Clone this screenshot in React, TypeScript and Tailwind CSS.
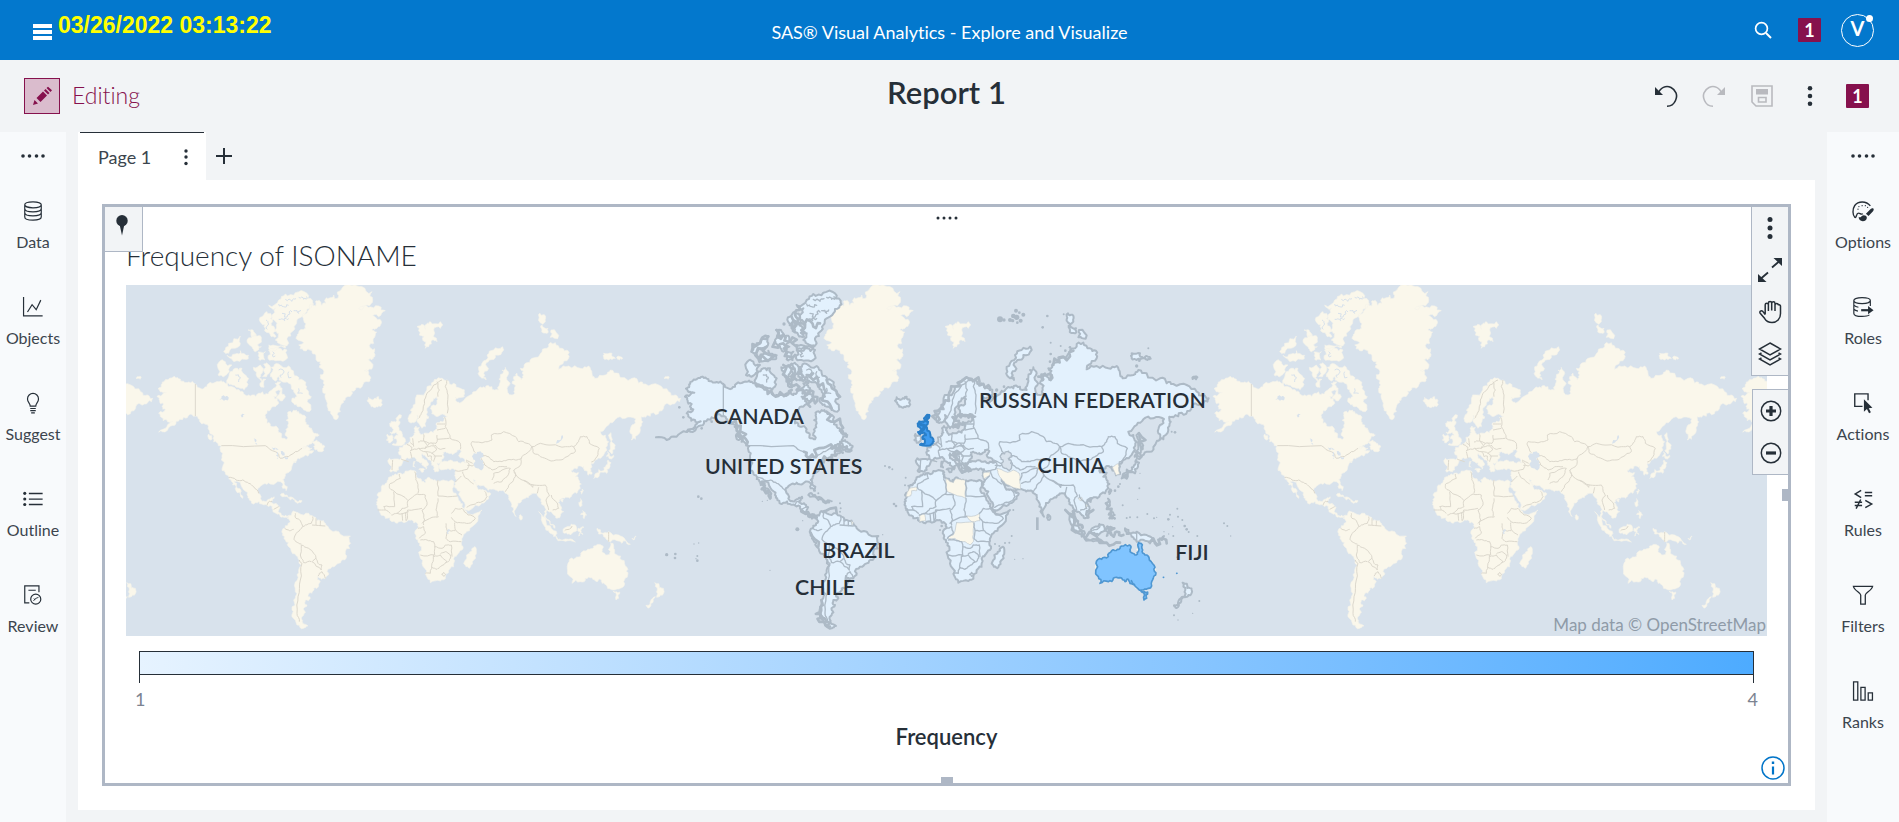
import type { ReactNode } from "react";

/* ---------- Map geometry ---------- */

// One world copy is 1584 units wide; longitude 0 is at x = 870, the equator at y = 745.
const WORLD = 1584;

const CONTINENTS = [
  // North America
  "250,312 230,306 215,304 200,296 183,291 170,298 155,305 148,318 138,326 150,335 163,338 150,345 135,350 143,362 155,372 150,380 160,388 140,400 148,412 165,420 182,424 165,440 140,456 150,455 176,438 192,424 215,412 232,404 250,408 262,418 275,430 288,445 295,462 303,475 315,488 328,498 326,515 328,540 332,560 340,578 350,590 357,600 362,615 372,632 385,648 392,655 384,640 372,620 366,604 378,605 392,625 405,645 412,660 430,668 450,672 465,676 480,685 492,700 505,710 520,712 530,708 520,706 508,704 500,690 498,675 485,672 478,668 482,658 486,650 470,658 455,663 445,655 440,640 443,622 455,612 470,608 490,610 505,605 512,610 518,625 522,632 516,612 512,600 520,588 532,575 540,558 552,548 545,545 555,538 570,532 580,525 590,525 605,512 590,512 600,505 588,500 572,505 585,495 600,490 605,480 622,465 612,460 600,450 590,435 580,425 570,405 560,395 545,390 530,395 528,410 530,430 525,445 520,460 525,478 512,475 508,460 500,448 480,440 465,430 460,415 465,400 475,390 490,380 500,370 495,355 485,350 500,345 510,330 500,315 505,305 490,310 480,330 470,340 460,345 440,340 420,345 400,345 385,335 370,325 350,320 335,305 320,305 300,310 285,320 265,325",
  // South America
  "528,708 540,698 550,695 560,700 590,700 610,712 625,722 640,730 650,745 680,755 715,768 716,790 700,815 698,840 680,850 660,860 650,880 640,895 628,898 618,888 625,905 620,918 605,925 600,940 590,942 595,955 580,960 585,975 575,990 575,1005 570,1020 572,1030 588,1038 575,1045 555,1035 540,1010 540,990 545,960 550,935 556,900 560,870 562,840 550,822 530,800 520,780 512,760 518,745 528,735 532,720",
  // Africa
  "848,583 858,580 880,573 910,573 912,590 918,595 930,605 940,608 945,595 960,598 978,602 1000,602 1018,600 1026,606 1025,620 1032,640 1045,665 1050,680 1065,695 1070,702 1110,690 1098,715 1080,740 1060,760 1050,775 1048,790 1050,810 1035,825 1025,835 1025,850 1015,865 1000,890 985,903 955,908 948,898 938,865 925,835 928,800 918,780 912,765 918,745 915,730 905,728 890,720 860,725 840,725 820,715 805,700 797,685 795,670 798,655 795,645 808,620 825,608 835,590",
  // Eurasia
  "845,573 833,572 830,550 832,535 855,537 870,538 866,525 860,520 866,512 862,503 872,502 884,492 895,485 905,466 910,458 906,445 912,438 922,442 922,458 935,463 950,460 965,458 975,445 972,432 985,424 996,422 994,412 1006,410 985,405 968,406 960,392 958,378 975,365 975,350 965,355 955,370 945,385 945,400 950,410 942,425 940,440 930,445 922,432 918,415 915,405 905,428 895,428 890,410 895,390 910,372 925,345 945,320 965,305 985,295 1005,300 1025,310 1045,325 1058,342 1050,352 1030,352 1036,366 1050,365 1060,355 1075,345 1085,335 1100,325 1120,325 1140,320 1160,330 1165,305 1165,290 1170,270 1180,262 1190,280 1190,305 1185,325 1200,345 1208,330 1200,310 1205,290 1215,280 1228,300 1235,285 1225,265 1240,250 1260,235 1290,215 1310,200 1330,188 1350,205 1368,212 1370,235 1345,255 1340,268 1370,258 1405,265 1430,258 1440,280 1448,295 1480,285 1495,270 1520,280 1560,295 1580,310 1600,312 1640,315 1670,335 1690,345 1706,355 1692,365 1680,372 1665,370 1650,392 1625,398 1600,412 1588,410 1592,425 1585,450 1570,478 1558,480 1555,460 1560,435 1572,417 1540,415 1510,418 1490,435 1465,455 1480,465 1490,485 1485,510 1470,530 1450,540 1438,550 1434,566 1440,582 1428,586 1422,572 1415,560 1400,558 1390,565 1378,570 1388,578 1400,578 1390,590 1400,600 1408,612 1405,625 1395,640 1378,650 1365,652 1350,655 1342,660 1338,668 1348,680 1355,695 1345,708 1335,715 1325,705 1315,695 1305,690 1302,705 1310,720 1322,735 1328,745 1315,735 1305,720 1300,700 1298,680 1288,672 1285,655 1275,640 1265,640 1255,645 1240,655 1228,665 1215,680 1212,710 1205,700 1198,680 1192,660 1190,645 1180,640 1168,632 1150,630 1140,628 1120,622 1100,615 1090,600 1085,598 1095,615 1105,628 1115,630 1125,635 1135,645 1120,665 1100,678 1070,692 1062,690 1060,675 1045,650 1033,625 1028,608 1030,590 1030,575 1032,568 1015,570 1000,568 990,570 980,558 985,545 995,543 1010,542 1030,545 1050,545 1062,548 1055,535 1040,525 1048,513 1035,510 1025,522 1010,520 1000,515 992,525 988,540 985,548 975,550 980,560 976,575 968,572 965,560 958,548 955,540 940,528 930,520 928,525 938,540 950,552 942,568 935,558 920,545 910,535 895,535 880,540 870,552 860,570",
];

const ISLANDS = [
  // Canadian Arctic
  "480,105 490,85 470,75 500,60 520,42 550,38 585,40 602,62 598,82 580,100 560,115 550,135 540,155 525,175 530,190 500,190 490,180 500,160 488,150 495,130 480,120",
  "450,110 465,95 478,105 482,125 488,145 492,170 475,165 460,145 448,130",
  "470,210 500,205 525,210 520,240 490,242 468,235",
  "470,195 495,198 520,196 520,204 495,206 470,205",
  "335,215 350,190 385,168 385,190 365,205 350,220",
  "345,226 370,222 385,212 410,226 405,238 375,242",
  "405,180 430,165 448,172 436,195 448,200 430,215 420,200",
  "438,216 460,215 458,240 440,238",
  "408,150 425,155 432,168 418,170",
  "322,245 340,245 360,255 352,275 335,290 318,285",
  "352,280 370,265 390,265 400,285 410,295 405,320 385,325 360,315 345,310",
  "424,262 445,255 450,280 436,292",
  "455,252 472,255 465,285 452,290",
  "440,295 462,298 456,322 444,318",
  "478,262 500,252 530,258 545,280 560,300 580,315 590,335 598,350 590,370 592,395 575,390 560,380 545,370 540,355 555,350 545,330 530,310 510,305 500,290 485,300 475,290",
  "490,335 510,330 520,350 505,362 495,355",
  "600,485 615,480 625,490 638,498 635,512 615,508 605,500",
  "290,462 300,478 296,480 288,470",
  // Caribbean
  "505,645 525,645 548,658 535,660 510,650",
  "548,658 570,662 560,668 550,666",
  // Iceland, Ireland
  "770,352 785,358 800,350 810,362 800,378 785,382 775,374 765,362",
  "826,462 840,465 843,478 830,488 823,480",
  // Arctic Russia
  "1110,295 1102,275 1110,250 1125,225 1145,210 1170,200 1175,210 1150,225 1132,240 1125,260 1115,280 1122,300",
  "1284,100 1297,104 1300,125 1288,130 1280,118",
  "1290,135 1308,145 1305,160 1290,150",
  "1317,150 1337,176 1315,172",
  "1475,220 1500,220 1510,235 1490,240 1475,235",
  "1514,232 1532,236 1522,240",
  "1660,290 1672,292 1668,298 1658,297",
  // Mediterranean
  "920,568 938,568 934,576",
  "905,545 910,545 909,562 903,560",
  // East Asia
  "1497,458 1503,490 1508,500 1500,522 1495,500",
  "1486,516 1505,526 1494,536 1484,530",
  "1488,540 1494,560 1485,580 1462,583 1445,595 1452,580 1474,572 1482,556",
  "1410,628 1414,632 1408,642 1406,636",
  "1404,656 1410,676 1404,680 1400,668",
  "1412,692 1424,705 1416,716 1406,704",
  "1224,704 1231,712 1228,720 1223,716",
  "1346,660 1354,658 1352,666",
  // Indonesia
  "1280,695 1302,725 1326,752 1334,772 1320,762 1300,742",
  "1332,772 1370,778 1390,786 1360,784 1336,779",
  "1356,745 1378,732 1390,735 1388,755 1375,765 1358,760",
  "1398,745 1416,742 1406,750 1412,764 1404,758 1400,768",
  "1455,745 1470,760 1490,755 1520,765 1540,780 1555,793 1530,790 1515,782 1490,785 1475,770 1460,762",
  "1560,775 1572,768 1566,780",
  // Madagascar, New Zealand
  "1088,800 1093,815 1085,840 1075,862 1062,860 1060,840 1068,822 1080,812",
  "1628,908 1642,924 1655,930 1645,945 1634,952 1636,930",
  "1630,950 1622,968 1610,984 1602,976 1616,962",
];

const GREENLAND =
  "575,100 590,90 600,72 612,78 610,66 625,65 630,76 640,70 640,58 650,55 665,45 672,56 676,36 690,25 720,17 750,20 780,35 782,60 765,75 740,86 768,82 800,78 820,92 800,110 782,106 804,118 808,130 795,145 780,148 794,156 790,165 785,190 772,196 788,206 788,230 778,240 768,238 782,262 765,275 756,272 775,290 770,305 750,320 730,330 718,345 700,355 690,370 685,395 678,415 660,405 648,385 640,355 632,330 638,315 625,295 635,280 622,262 625,245 612,225 600,212 575,212 560,195 575,188 552,175 560,160 580,145 575,120";
const SVALBARD =
  "915,140 935,135 940,148 944,132 955,125 985,125 985,145 965,150 975,185 960,180 950,200 940,205 942,185 932,178 936,168 922,165";
const BRITAIN =
  "868,405 860,420 863,432 858,440 862,452 870,460 880,478 878,490 840,494 855,485 848,477 858,466 850,458 840,463 834,456 845,448 835,440 833,430 845,425 855,422";
const AUSTRALIA =
  "1368,850 1385,838 1405,830 1415,812 1432,808 1445,798 1468,795 1472,805 1470,815 1485,825 1495,815 1496,788 1503,790 1508,810 1515,825 1528,840 1545,862 1547,885 1535,905 1525,925 1505,930 1485,918 1470,910 1465,898 1455,905 1440,893 1420,895 1405,905 1380,910 1375,890";
const TASMANIA = "1503,934 1523,936 1520,955 1512,960";
const CASPIAN =
  "1100,515 1085,520 1080,530 1090,545 1095,565 1112,568 1112,550 1105,535 1116,530 1110,518";

const BORDERS = [
  // North America
  "250,312 250,408",
  "328,497 460,497 490,515 505,535 530,530 550,515 570,505",
  "350,592 372,600 392,600 410,610 425,620 440,640",
  "465,676 472,664 480,664",
  "485,688 500,680",
  // South America
  "550,700 552,715 565,722 572,740 565,748 550,765",
  "602,710 598,730 580,735 572,740",
  "518,745 532,752 545,748",
  "550,765 546,778 552,785 568,792",
  "568,795 568,835 575,848 598,845",
  "568,795 590,805 605,820 612,835 600,845 628,870",
  "562,840 570,850 565,900 558,950 555,1000 562,1025",
  "618,888 630,875 640,895",
  "612,835 618,850 630,855 628,870",
  "612,715 612,735",
  "625,722 625,738",
  "600,735 640,738",
  // Africa
  "862,582 865,595 848,605 833,612 832,622 845,632",
  "845,635 848,680 815,680 820,690 835,700",
  "845,632 888,662 915,642 940,645",
  "908,575 912,595 915,605 918,640",
  "978,600 978,648 1036,648",
  "940,645 945,675 930,690 938,720 935,735",
  "978,655 972,690 975,710",
  "888,662 888,680 870,685 855,700",
  "883,722 887,690 930,685",
  "930,730 960,712 980,710",
  "1018,700 1030,685 1050,685 1068,705 1090,715 1070,730 1045,728 1028,725 1018,712",
  "1028,728 1030,750 1050,765",
  "1002,730 1005,752 1030,752",
  "1005,755 1002,775 1015,785 1048,785",
  "925,780 945,780 965,785 968,825 925,825",
  "968,800 990,805 1000,795 1018,795 1020,830",
  "965,825 960,850 955,880 940,880",
  "965,830 985,825 1005,845 985,860 975,868 960,862",
  "985,822 1000,815 1015,825 1012,842 1000,848",
  "870,700 872,722",
  "880,697 882,722",
  "838,705 855,700 890,695",
  "797,690 820,690",
  "918,745 935,740 940,760 922,775",
  "989,883 995,877 1001,883 995,889 989,883",
  // Europe
  "1005,300 1000,320 1008,345 1006,400",
  "975,305 982,330 978,350",
  "990,300 965,315 950,335 937,360 928,400 920,415",
  "998,412 1000,440 1010,460 1014,475 1045,490 1045,508",
  "935,463 935,482 952,490 972,490 975,465",
  "975,432 1000,432",
  "975,450 1000,445",
  "975,478 1012,475",
  "970,495 985,508 1000,505",
  "884,492 900,502 895,512 920,505 940,505 952,490",
  "902,475 905,500",
  "895,515 900,535",
  "868,538 890,545",
  "842,540 840,570",
  "920,505 940,515 960,520 970,530 965,545",
  "940,505 965,498 975,508 960,520",
  "965,528 990,528",
  "918,486 935,482 945,494",
  "895,488 905,496",
  "940,515 948,530 958,528 960,542",
  "960,490 968,498",
  // Middle East
  "1030,572 1066,568 1070,550 1062,545",
  "1052,575 1058,592 1072,602 1085,612",
  "1048,588 1030,606",
  "1064,682 1090,672 1110,665 1125,650 1118,634",
  "1062,540 1082,550",
  "1066,556 1080,558 1088,552",
  // Central Asia
  "1090,518 1078,495 1080,485 1120,485 1140,480 1138,465 1175,455 1210,470 1220,485 1245,490 1260,500 1250,515 1230,530 1222,560 1205,572",
  "1112,525 1130,530 1145,545 1170,545 1185,540 1210,540 1228,535",
  "1108,535 1118,555 1140,570 1160,560 1185,560",
  "1140,600 1145,580 1170,570 1195,565 1185,590 1170,605 1145,610",
  "1205,570 1210,590 1195,610 1180,635",
  "1205,575 1230,600 1265,615 1300,615 1305,630",
  "1235,602 1262,622 1264,614",
  "1276,640 1280,622",
  "1305,630 1312,648 1302,660 1310,690",
  "1318,645 1335,668 1340,685 1322,690",
  // East Asia
  "1260,500 1285,490 1320,495 1360,500 1385,500 1390,515 1365,530 1340,540 1310,540 1285,530 1265,520 1260,500",
  "1385,500 1400,485 1405,470 1425,470 1432,490 1462,505 1455,530 1438,546",
  "1358,752 1372,748 1380,738",
  "1490,756 1490,785",
];

const UNREPORTED = [
  "808,625 832,622 830,632 815,632 812,648 797,650",
  "918,596 930,605 940,608 947,596 960,598 977,602 977,655 930,638 918,632",
  "980,708 1000,708 1018,700 1020,722 1000,727 988,720",
  "950,728 1002,725 1000,745 998,770 1000,785 990,795 975,785 955,782 945,775 922,775 940,765",
  "838,705 855,703 857,722 838,725",
  "1070,565 1090,572 1102,577 1120,570 1138,580 1140,600 1142,628 1115,620 1098,612 1085,598 1075,582",
  "1030,578 1052,575 1048,588 1032,597",
  "1417,562 1435,551 1436,568 1440,582 1428,586 1422,572",
  "1315,654 1325,652 1330,662 1320,662",
  "1336,670 1342,676 1338,684",
  "633,722 641,728 635,736",
];

// Ragged shorelines drawn as heavier strokes.
const ROCKY = [
  "886,418 896,392 912,372 926,345 945,320 965,303 985,295 1005,299 1030,312 1050,330",
  "890,395 892,425",
  "955,405 962,412 975,405 998,408",
  "940,442 944,422 950,410",
  "285,440 303,475 320,494",
  "275,430 290,452 308,480",
  "544,960 538,1000 548,1025 570,1040",
  "541,985 545,1015 560,1038",
  "362,610 378,640 390,655",
  "480,330 500,345 520,335 525,370 510,380",
  "500,285 520,300 535,320 550,345 575,385",
  "480,262 490,290 478,300",
  "560,395 585,425 600,452 620,470",
  "600,350 585,330 560,300",
  "378,325 400,345 430,345 455,330",
  "430,255 440,290 452,315 470,330",
  "455,252 465,275 470,300",
  "350,215 380,200 405,225 380,240 350,225",
  "335,215 360,190 385,170",
  "405,185 430,190 440,215 465,225",
  "410,150 430,165 450,185 470,200",
  "478,80 465,105 485,130 492,160",
  "455,110 450,135 465,155",
  "495,130 520,140 540,130",
  "968,550 978,572 992,572",
  "972,556 982,566 986,574",
  "940,520 955,540",
  "492,515 510,530 530,525 560,500 600,490",
  "545,545 575,525 600,512 632,510",
  "1276,690 1300,735 1330,768",
  "1335,776 1400,788 1440,788",
  "1360,690 1345,712",
  "1398,670 1412,700 1424,715",
  "1402,740 1415,765 1430,755 1450,765",
  "1462,583 1448,592",
  "1497,460 1504,505",
  "1240,255 1270,230 1300,212",
  "1195,290 1220,285 1232,300",
  "940,440 960,430 975,435",
  "1530,785 1560,792 1580,790",
  "485,690 505,706 530,712",
  "548,695 590,700",
  "512,758 535,800",
];

// Inlets inside the islands of northern Canada.
const INLETS = [
  "500,72 515,80 530,76",
  "520,58 540,64 552,56",
  "560,52 575,58 582,50",
  "510,100 528,104 540,96",
  "545,92 560,100 566,90",
  "500,118 518,122 530,116",
  "462,120 470,132 466,148",
  "370,285 385,292 380,306",
  "500,270 512,282 508,292",
  "530,275 538,292",
  "560,325 572,340",
  "482,215 490,228",
];

const SPECKS: [number, number, number][] = [
  [1080, 118, 9], [1092, 120, 5], [1110, 120, 6], [1120, 108, 7], [1128, 92, 6], [1130, 112, 8], [1142, 122, 6], [1150, 104, 6], [1138, 98, 4], [1118, 122, 5], [1132, 128, 4],
  [1222, 108, 4], [1208, 142, 4], [1271, 103, 3], [1232, 188, 3], [1232, 222, 4], [1230, 245, 4], [1262, 198, 3], [1276, 212, 4], [1290, 202, 4],
  [1490, 258, 5], [1498, 242, 4], [1525, 205, 3], [1092, 320, 4], [1070, 330, 5], [1085, 332, 3], [1605, 457, 4], [1595, 455, 3],
  [735, 558, 3], [748, 562, 4], [757, 568, 3], [797, 593, 3], [795, 616, 3], [805, 617, 3], [815, 615, 4], [762, 672, 4], [768, 678, 4],
  [472, 748, 6], [488, 722, 2], [175, 650, 4], [184, 656, 4], [367, 664, 2], [382, 661, 2], [600, 670, 3], [602, 685, 3], [600, 695, 3], [575, 664, 3],
  [80, 824, 5], [106, 822, 4], [105, 834, 4], [172, 828, 3], [172, 842, 4], [168, 836, 2], [162, 792, 2], [176, 789, 2], [390, 871, 2], [728, 764, 2],
  [512, 640, 3], [525, 632, 3], [535, 640, 3], [900, 750, 3], [905, 738, 4],
  [1065, 792, 3], [1078, 798, 3], [1095, 789, 3], [1108, 788, 3], [1115, 768, 3], [1124, 838, 2], [1149, 836, 2],
  [1460, 714, 3], [1470, 712, 3], [1492, 712, 3], [1522, 702, 3], [1542, 715, 3], [1550, 712, 2], [1585, 718, 4], [1590, 704, 3], [1612, 686, 3], [1614, 710, 3],
  [1627, 720, 3], [1634, 738, 4], [1640, 748, 4], [1646, 756, 3], [1600, 768, 3], [1598, 740, 2], [1572, 755, 2], [1586, 762, 2], [1672, 768, 3], [1752, 730, 3], [1762, 738, 3], [1772, 768, 2],
  [1425, 632, 4], [1435, 620, 4], [1440, 612, 3], [1498, 625, 3], [1493, 658, 2], [1448, 676, 3], [1120, 690, 3],
  [1678, 963, 3], [1658, 1000, 2], [1602, 1006, 3], [1614, 1020, 2], [1618, 820, 3], [1612, 832, 3], [1652, 832, 3], [1668, 836, 3],
  [1225, 712, 3], [1500, 580, 2], [118, 382, 4], [130, 412, 4], [185, 445, 4], [215, 425, 4], [432, 132, 5], [620, 500, 5], [608, 518, 4],
];

type Pt = [number, number];

const parse = (s: string): Pt[] => s.split(" ").map((p) => p.split(",").map(Number) as Pt);

const noise = (x: number, y: number) => {
  const n = Math.sin(x * 12.9898 + y * 78.233) * 43758.5453;
  return (n - Math.floor(n)) * 2 - 1;
};

// Splits every segment around a displaced midpoint to give coasts a natural edge.
const fracture = (pts: Pt[], amount: number, rounds: number): Pt[] => {
  let line = pts;
  for (let r = 0; r < rounds; r += 1) {
    const next: Pt[] = [];
    for (let i = 0; i < line.length - 1; i += 1) {
      const [ax, ay] = line[i];
      const [bx, by] = line[i + 1];
      next.push([ax, ay]);
      const len = Math.hypot(bx - ax, by - ay);
      if (len > 5) {
        const k = noise(ax + bx, ay + by) * amount * Math.min(1, 22 / len);
        next.push([(ax + bx) / 2 - (by - ay) * k, (ay + by) / 2 + (bx - ax) * k]);
      }
    }
    next.push(line[line.length - 1]);
    line = next;
  }
  return line;
};

const toPath = (pts: Pt[]) => "M" + pts.map(([x, y]) => `${x.toFixed(1)} ${y.toFixed(1)}`).join("L");
const area = (s: string, amount = 0.36) => {
  const p = parse(s);
  return toPath(fracture([...p, p[0]], amount, 2)) + "Z";
};
const line = (s: string, amount = 0) => toPath(fracture(parse(s), amount, 2));

const LAND = [...CONTINENTS, ...ISLANDS].map((s) => area(s)).join("");
const CREAM_ONLY = [GREENLAND, SVALBARD, BRITAIN, AUSTRALIA, TASMANIA].map((s) => area(s)).join("");
const BORDER_PATH = BORDERS.map((s) => line(s, s.split(" ").length > 2 ? 0.15 : 0)).join("");
const ROCKY_PATH = ROCKY.map((s) => line(s, 0.8)).join("");
const INLET_PATH = INLETS.map((s) => line(s, 0.6)).join("");
const UNREPORTED_PATH = UNREPORTED.map((s) => area(s, 0.1)).join("");
const LAKES = [
  "478,500 490,502 500,508 486,510",
  "494,518 498,516 498,536 494,536",
  "506,514 518,518 520,526 510,524",
  "510,538 528,532 526,538",
  "425,475 432,478 436,494 430,488",
  "385,405 398,402 392,412",
  "322,358 340,350 350,352 336,362",
  "1003,752 1014,750 1012,762 1004,760",
  "1332,492 1348,478 1352,466 1344,484",
]
  .map((s) => area(s))
  .join("");

const LABELS: [string, number, number][] = [
  ["CANADA", 356, 431],
  ["UNITED STATES", 431, 581],
  ["BRAZIL", 655, 833],
  ["CHILE", 555, 945],
  ["RUSSIAN FEDERATION", 1357, 383],
  ["CHINA", 1294, 579],
  ["FIJI", 1656, 840],
];

function WorldMap() {
  return (
    <svg
      viewBox="-1542 15 4923 1053"
      className="block w-full bg-[#d8e2ec]"
      role="img"
      aria-label="World map of ISONAME frequency"
    >
      <defs>
        <g id="world">
          <path d={LAND + CREAM_ONLY} fill="#faf7eb" stroke="#f4f3ea" strokeWidth="2" />
          <path d={INLET_PATH} fill="none" stroke="#d8e2ec" strokeWidth="3" />
          <path d={BORDER_PATH} fill="none" stroke="#dcd8cd" strokeWidth="3" />
          <path d={area(CASPIAN) + LAKES} fill="#d8e2ec" />
        </g>
      </defs>
      {[-2, -1, 0, 1, 2].map((n) => (
        <use key={n} href="#world" x={n * WORLD} />
      ))}
      <g strokeLinejoin="round" strokeLinecap="round">
        <path d={LAND} fill="#e3f1fd" stroke="#adbac6" strokeWidth="6" />
        <path d={INLET_PATH} fill="none" stroke="#adbac6" strokeWidth="4" />
        <path d={UNREPORTED_PATH} fill="#faf7eb" stroke="#bcc5cb" strokeWidth="2" />
        <path d={BORDER_PATH} fill="none" stroke="#adbac6" strokeWidth="4" />
        <path d={ROCKY_PATH} fill="none" stroke="#adbac6" strokeWidth="8" />
        <path d={area(CASPIAN)} fill="#d8e2ec" stroke="#adbac6" strokeWidth="4" />
        <path
          d={line("165,440 140,456 110,470 80,480 48,472", 0.3) + line("1505,528 1528,515 1545,495 1556,482", 0.3)}
          fill="none"
          stroke="#adbac6"
          strokeWidth="6"
        />
        <path d="M1192 712V750" stroke="#adbac6" strokeWidth="8" strokeLinecap="butt" />
        {SPECKS.map(([x, y, r], i) => (
          <circle key={i} cx={x} cy={y} r={r} fill="#adbac6" />
        ))}
        <path d={area(AUSTRALIA, 0.3) + area(TASMANIA)} fill="#80c4ff" stroke="#4f97d2" strokeWidth="5" />
        <path d="M1474 902l6 12 M1570 892h1 M1610 880h1" stroke="#4f97d2" strokeWidth="5" />
        <path d={area(BRITAIN)} fill="#3f9cf0" stroke="#2a7fc9" strokeWidth="6" />
        <path d="M838 432l18 6-8 12-10 8 M866 408l-8 14" fill="none" stroke="#2a7fc9" strokeWidth="10" />
      </g>
      <g className="fill-[#262f38] font-['Lato',sans-serif] text-[64px] font-semibold" textAnchor="middle">
        {LABELS.map(([name, x, y]) => (
          <text key={name} x={x} y={y}>
            {name}
          </text>
        ))}
      </g>
      <text
        x="3378"
        y="1053"
        textAnchor="end"
        className="fill-[#8f9ba8] font-['Lato',sans-serif] text-[51px]"
      >
        Map data © OpenStreetMap
      </text>
    </svg>
  );
}

/* ---------- Icons ---------- */

function Icon({ children, size = "size-6", className = "" }: { children: ReactNode; size?: string; className?: string }) {
  return (
    <svg
      viewBox="0 0 24 24"
      className={`${size} ${className} shrink-0`}
      fill="none"
      stroke="currentColor"
      strokeWidth="1.3"
      aria-hidden="true"
    >
      {children}
    </svg>
  );
}

const icons: Record<string, ReactNode> = {
  Data: (
    <path d="M3 5.2C3 3.3 7 2 12 2s9 1.3 9 3.2S17 8.5 12 8.5 3 7.1 3 5.2V18.5C3 20.7 7 22 12 22s9-1.3 9-3.5V5.2M3 9.500c0 2 4 3.400 9 3.400s9-1.400 9-3.400M3 14c0 2 4 3.400 9 3.400s9-1.400 9-3.400" />
  ),
  Objects: <path d="M1.7 1v20.600H22.500M6 17.500l5-8 4.500 5.500L20.500 4.500" />,
  Suggest: (
    <path d="M9 15.500C9 12 6 11.500 6 7.500a6 6 0 0 1 12 0c0 4-3 4.500-3 8zM9 18h6M9 20.300h6M10 22.700h4" />
  ),
  Outline: (
    <>
      <path d="M7.500 6H22.500M7.500 12.200H22.500M7.500 18H22.500" strokeWidth="1.5" />
      <g fill="currentColor" stroke="none">
        <circle cx="3" cy="5.8" r="1.7" />
        <circle cx="3" cy="12" r="1.7" />
        <circle cx="3" cy="18" r="1.7" />
      </g>
    </>
  ),
  Review: (
    <>
      <path d="M8 20.500H3V2H18.500V9M7 6.800h8" />
      <circle cx="15" cy="16.5" r="5.5" />
      <path d="M12.500 18.500l2-2.500 3.500-1.500M13 15.800l1.500 1.700" strokeWidth="1" />
    </>
  ),
  Options: (
    <>
      <path d="M3.200 19C.5 16.500.3 10 3 6 6.500 1 15.500.5 20 6.500M3.200 19C5 19.800 4.500 14.500 7 14.300c1.800-.2 2.500 2 5 .7" strokeWidth="1.5" />
      <path d="M6.500 10h.1M7.500 7.200h.1M11 6.200h.1M14.500 6.200h.1M17 8h.1" strokeWidth="1.3" strokeLinecap="round" />
      <path d="M23.300 9.300c.8.900.3 2.300-.6 3.300l-4.700 4.900-2.800-2.600 4.600-4.600c1-1 2.600-1.900 3.500-1z" fill="currentColor" stroke="none" />
      <path d="M7.300 18.300c1.400 1.300 2.500.3 3.400-.8 1.300-1.500 5.300-1 5.500 1.600.2 2.400-2 4-4.500 4-2.600 0-4.600-2-4.400-4.800z" fill="currentColor" stroke="none" />
    </>
  ),
  Roles: (
    <>
      <path d="M20 11V5c0-2-4-3.300-9-3.300S2 3 2 5s4 3.300 9 3.300S20 7 20 5M2 5v14c0 2 4 3.300 9 3.300 3.500 0 6.500-.6 8-1.700M2 10c1 1 3 2 5 2.300M2 14.500c1 1 2.500 1.700 4.500 2" />
      <path d="M10 15.500h9" strokeWidth="2.4" />
      <path d="M17.500 11L23.500 15.500l-6 4.500z" fill="currentColor" stroke="none" />
    </>
  ),
  Actions: (
    <>
      <path d="M11.500 15.700H3V2h14.500v7" strokeWidth="1.5" />
      <path d="M13 8v13.500l3.300-3 2.300 4.700 2-1-2.300-4.600 4-.4z" fill="currentColor" stroke="none" />
    </>
  ),
  Rules: (
    <path d="M10 2.500L3.500 6.500 10 10.500M14 5h8M14 8.500h8M3 15.500h8M3 19h8M9.500 12.500L4.500 22.500M14.500 13.500l7 4-7 4" strokeWidth="1.6" />
  ),
  Filters: <path d="M1.500 2.500h21c-.5 4.500-8 7-8 9.500v10h-5V12c0-2.500-7.500-5-8-9.500z" strokeWidth="1.4" />,
  Ranks: <path d="M1.700 2h4.600v20H1.700zM9.700 8h4.600v14H9.700zM17.700 14h4.600v8h-4.600z" strokeWidth="1.4" />,
};

function Kebab({ size }: { size: string }) {
  return (
    <svg viewBox="0 0 24 24" className={`${size} shrink-0`} fill="currentColor" aria-hidden="true">
      <circle cx="12" cy="3.5" r="2.5" />
      <circle cx="12" cy="12" r="2.5" />
      <circle cx="12" cy="20.5" r="2.5" />
    </svg>
  );
}

function Grip() {
  return (
    <svg viewBox="0 0 26 6" className="h-[6px] w-[26px]" fill="currentColor" aria-hidden="true">
      {[3, 9.5, 16.5, 23].map((x) => (
        <circle key={x} cx={x} cy="3" r="1.8" />
      ))}
    </svg>
  );
}

/* ---------- Page ---------- */

function SideRail({ items, label, className }: { items: string[]; label: string; className: string }) {
  return (
    <nav aria-label={label} className={`${className} flex shrink-0 flex-col items-center bg-[#f8fafc]`}>
      <button type="button" aria-label={`Move ${label}`} className="flex h-12 w-full items-center justify-center">
        <Grip />
      </button>
      {items.map((item) => (
        <button key={item} type="button" className="flex h-24 w-full flex-col items-center gap-2 pt-5 text-base">
          <Icon size="size-[22px]">{icons[item]}</Icon>
          <span className="leading-6 text-[#3c454e]">{item}</span>
        </button>
      ))}
    </nav>
  );
}

function Badge() {
  return (
    <span className="flex h-6 w-[23px] items-center justify-center rounded-[1px] bg-[#86114d] text-lg leading-none font-bold text-white">
      1
    </span>
  );
}

const TOOL = "flex h-[42px] w-full items-center justify-center";

export default function App() {
  return (
    <div className="flex min-h-screen flex-col bg-[#f2f4f6] font-['Lato',sans-serif] text-[#262f38] [font-variant-ligatures:none]">
      <header className="grid h-[60px] grid-cols-[1fr_auto_1fr] items-center bg-[#0378cd] px-[25px] text-white">
        <div className="flex items-center gap-[6px] pl-2">
          <button type="button" aria-label="Applications menu" className="mt-1 flex flex-col gap-[2px]">
            <span className="block h-1 w-[19px] bg-white" />
            <span className="block h-1 w-[19px] bg-white" />
            <span className="block h-1 w-[19px] bg-white" />
          </button>
          <time className="pb-[10px] font-['Liberation_Sans',sans-serif] text-[23px] leading-7 font-bold text-[#ffff00]">
            03/26/2022 03:13:22
          </time>
        </div>
        <span className="pt-1 text-lg">SAS® Visual Analytics - Explore and Visualize</span>
        <div className="flex items-center justify-end">
          <button type="button" aria-label="Search" className="mr-[26px]">
            <svg viewBox="0 0 18 18" className="size-[18px]" fill="none" stroke="currentColor" strokeWidth="1.7">
              <circle cx="7.5" cy="7.5" r="5.9" />
              <path d="M12 12l5 5" strokeWidth="2" />
            </svg>
          </button>
          <Badge />
          <button
            type="button"
            aria-label="User V"
            className="relative ml-5 flex size-[33px] items-center justify-center rounded-full border border-white pb-1 text-xl leading-none font-bold"
          >
            V
            <span className="absolute top-0 right-0 size-[7px] rounded-full bg-white" />
          </button>
        </div>
      </header>

      <div className="grid h-[72px] grid-cols-[1fr_auto_1fr] items-center pr-[30px] pl-6">
        <button type="button" className="flex items-center gap-[12px] justify-self-start text-[23px] font-light text-[#86114d]">
          <span className="flex size-9 items-center justify-center border border-[#86114d] bg-[#dabccd]">
            <svg viewBox="0 0 20 20" className="size-5" fill="currentColor" aria-hidden="true">
              <path d="M1 19l1.500-5L6 17.500zM4.500 12l6.500-6.500 4 4L8.500 16zM12 4.500l1.500-1.500 4 4L16 8.500zM14.500 2L16 .8l4 3.500L18.500 6z" />
            </svg>
          </span>
          <span className="pb-[2px]">Editing</span>
        </button>
        <h1 className="pb-2 text-[31px] font-semibold">Report 1</h1>
        <div className="flex items-center justify-end gap-6">
          <button type="button" aria-label="Undo">
            <Icon>
              <path d="M4 10C6 3.500 12 1 17 3.500s7 8 4.500 13C20 20 17 22.200 13 22.200" strokeWidth="1.6" />
              <path d="M1 3v8h8z" fill="currentColor" stroke="none" />
            </Icon>
          </button>
          <button type="button" aria-label="Redo" disabled className="text-[#b9babf]">
            <Icon className="-scale-x-100">
              <path d="M4 10C6 3.500 12 1 17 3.500s7 8 4.500 13C20 20 17 22.200 13 22.200" strokeWidth="1.6" />
              <path d="M1 3v8h8z" fill="currentColor" stroke="none" />
            </Icon>
          </button>
          <button type="button" aria-label="Save" disabled className="text-[#b9babf]">
            <Icon>
              <path d="M2 2h20v20H6l-4-4z" strokeWidth="1.6" />
              <path d="M6 5h12v5.500H6z" fill="currentColor" stroke="none" />
              <path d="M8.500 13.500h7.500v4.500H8.500z" strokeWidth="1.6" />
            </Icon>
          </button>
          <button type="button" aria-label="More actions" className="flex size-6 items-center justify-center">
            <Kebab size="size-[22px]" />
          </button>
          <Badge />
        </div>
      </div>

      <div className="flex grow">
        <SideRail label="Left pane" className="w-[66px]" items={["Data", "Objects", "Suggest", "Outline", "Review"]} />

        <main className="flex min-w-0 grow flex-col px-3 pb-3">
          <div className="flex h-12 items-stretch">
            <div className="flex w-32 bg-white px-[2px]">
              <div className="flex grow items-center justify-between border-t border-[#262f38] pr-2 pl-[18px]">
                <button type="button" className="text-lg text-[#3c454e]">
                  Page 1
                </button>
                <button type="button" aria-label="Page 1 menu">
                  <svg viewBox="0 0 20 20" className="size-5" fill="currentColor" aria-hidden="true">
                    <circle cx="10" cy="4" r="1.7" />
                    <circle cx="10" cy="10" r="1.7" />
                    <circle cx="10" cy="16.5" r="1.7" />
                  </svg>
                </button>
              </div>
            </div>
            <button type="button" aria-label="Add page" className="flex w-9 items-center justify-center">
              <svg viewBox="0 0 16 16" className="size-4" stroke="currentColor" strokeWidth="2" aria-hidden="true">
                <path d="M8 0v16M0 8h16" />
              </svg>
            </button>
          </div>

          <div className="flex grow flex-col bg-white p-6">
            <section className="relative flex grow flex-col border-[3px] border-[#aeb7c5] px-[21px] pt-7 pb-6">
              <h2 className="flex h-[50px] items-start text-[28px] leading-10 font-light">Frequency of ISONAME</h2>
              <WorldMap />
              <div className="mt-[15px] px-[13px]">
                <div className="h-6 border border-[#262f38] bg-linear-to-r from-[#e6f3ff] to-[#4dabff]" />
                <div className="h-2 border-x border-[#262f38]" />
                <div className="-mx-1 mt-[2px] flex justify-between text-lg leading-7 text-[#7c8391]">
                  <span>1</span>
                  <span>4</span>
                </div>
                <p className="mt-[10px] text-center text-[22px] leading-7 font-semibold">Frequency</p>
              </div>

              <button
                type="button"
                aria-label="Location"
                className="absolute top-0 left-0 flex h-[45px] w-[38px] justify-center border-r border-b border-[#aeb7c5] bg-[#f2f4f6] pt-2 pr-1"
              >
                <svg viewBox="0 0 14 22" className="h-[21px] w-[14px]" fill="currentColor" aria-hidden="true">
                  <circle cx="7" cy="6" r="6" />
                  <path d="M4.500 10h5L7 21.500z" />
                </svg>
              </button>
              <div className="absolute inset-x-0 top-2 flex justify-center">
                <svg viewBox="0 0 22 6" className="h-[6px] w-[22px]" fill="currentColor" aria-hidden="true">
                  {[2, 8, 14, 20].map((x) => (
                    <circle key={x} cx={x} cy="3" r="1.5" />
                  ))}
                </svg>
              </div>

              <div className="absolute top-0 right-0 w-[37px] border-b border-l border-[#aeb7c5] bg-[#f2f4f6]">
                <button type="button" aria-label="Object menu" className={TOOL}>
                  <Kebab size="size-6" />
                </button>
                <button type="button" aria-label="Maximize" className={TOOL}>
                  <Icon>
                    <path d="M14 9.500L21 3.500M10 14.500L3 20.500" strokeWidth="1.8" />
                    <path d="M15.500 0H24v8zM0 16v8h8.500z" fill="currentColor" stroke="none" />
                  </Icon>
                </button>
                <button type="button" aria-label="Pan" className={TOOL}>
                  <Icon>
                    <path
                      d="M7.200 14.500V4.800a1.600 1.600 0 0 1 3.200 0V11M10.400 10V3.200a1.600 1.600 0 0 1 3.300 0V10.500M13.700 10V3.500a1.600 1.600 0 0 1 3.300 0V11M17 10V5.200a1.600 1.600 0 0 1 3.300 0M20.300 5.200a1.300 1.300 0 0 1 2.200 1v7.300c0 5.500-3.500 9-8.500 9-4 0-6.200-2-7.500-4.200L2.200 13.200c-1.200-1.700 1-3.200 2.600-1.800l2.400 3.100"
                      strokeWidth="1.5"
                    />
                  </Icon>
                </button>
                <button type="button" aria-label="Layers" className={TOOL}>
                  <Icon>
                    <path
                      d="M12 1l10.500 6L12 13 1.500 7zM3.500 11L1.500 12 12 18l10.500-6-2-1M3.500 15.800l-2 1.200L12 23l10.500-6-2-1.200"
                      strokeWidth="1.5"
                    />
                  </Icon>
                </button>
              </div>
              <div className="absolute top-[182px] right-0 w-9 border-y border-l border-[#aeb7c5] bg-[#f2f4f6]">
                <button type="button" aria-label="Zoom in" className={TOOL}>
                  <Icon>
                    <circle cx="12" cy="12" r="9.7" strokeWidth="1.5" />
                    <path d="M12 7v10M7 12h10" strokeWidth="3.2" />
                  </Icon>
                </button>
                <button type="button" aria-label="Zoom out" className={TOOL}>
                  <Icon>
                    <circle cx="12" cy="12" r="9.7" strokeWidth="1.5" />
                    <path d="M7 12h10" strokeWidth="3.2" />
                  </Icon>
                </button>
              </div>
              <span className="absolute inset-y-0 right-0 my-auto h-3 w-[6px] bg-[#aeb7c5]" />
              <span className="absolute inset-x-0 bottom-0 mx-auto h-[6px] w-3 bg-[#aeb7c5]" />
              <button type="button" aria-label="Information" className="absolute right-[3px] bottom-[3px] text-[#0074c8]">
                <Icon>
                  <circle cx="12" cy="12" r="11" strokeWidth="1.5" />
                  <path d="M12 10.500v8" strokeWidth="2.2" />
                  <path d="M12 5.500v2.500" strokeWidth="2.4" />
                </Icon>
              </button>
            </section>
          </div>
        </main>

        <SideRail
          label="Right pane"
          className="w-[72px]"
          items={["Options", "Roles", "Actions", "Rules", "Filters", "Ranks"]}
        />
      </div>
    </div>
  );
}
